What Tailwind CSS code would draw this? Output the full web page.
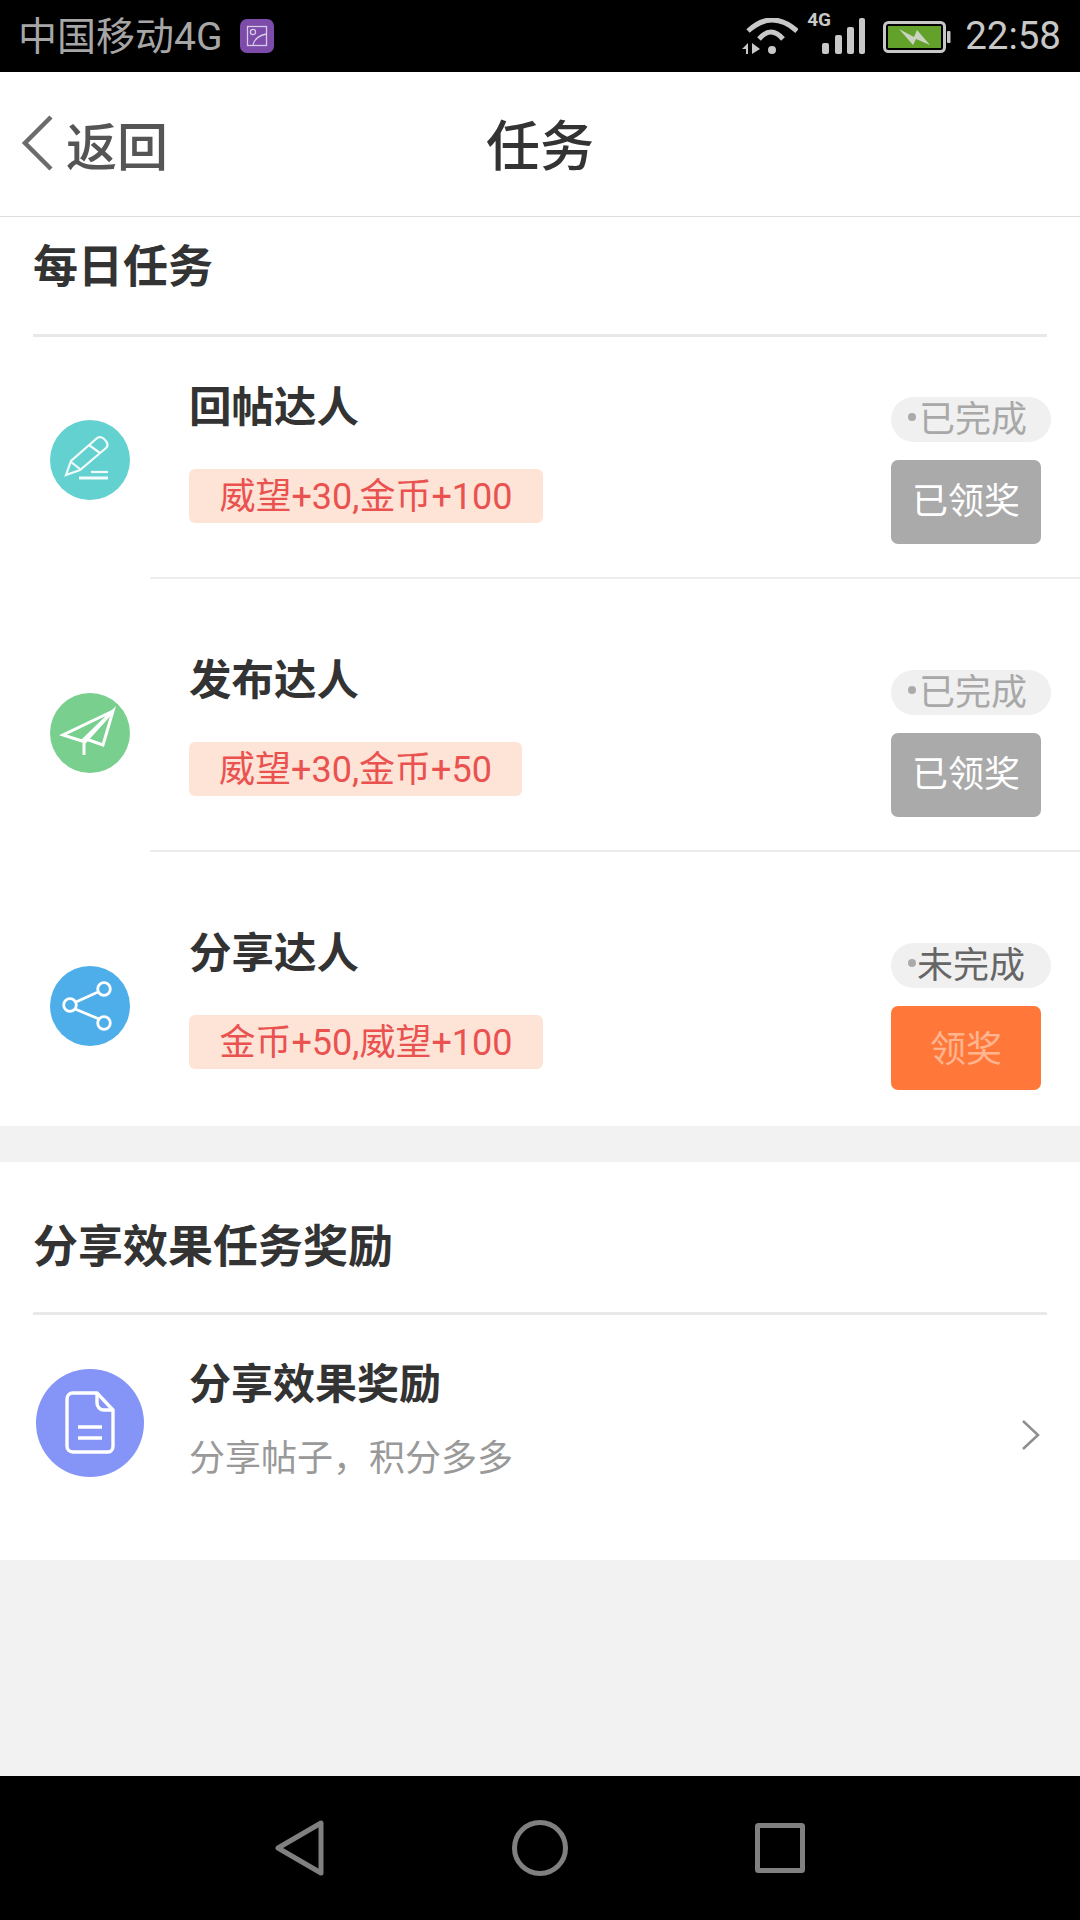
<!DOCTYPE html>
<html lang="zh"><head><meta charset="utf-8">
<script src="https://cdn.jsdelivr.net/npm/@tailwindcss/browser@4"></script>
</head>
<body class="m-0 bg-[#f2f2f2]">
<div class="w-[1080px] h-[1920px] flex flex-col overflow-hidden font-['Roboto','Noto_Sans_CJK_SC',sans-serif] bg-[#f2f2f2]">
  <!-- status bar -->
  <div class="h-[72px] bg-black flex items-center pl-[18px] pr-[19px] shrink-0">
    <span class="text-[39px] leading-[72px] text-[#a6a6a6] mt-[1px]">中国移动4G</span>
    <svg class="ml-[18px]" width="34" height="34" viewBox="0 0 34 34"><rect width="34" height="34" rx="7" fill="#7d4cab"/><rect x="7.500" y="7.500" width="19" height="19" fill="none" stroke="#d8cbe6" stroke-width="1.300"/><circle cx="13" cy="13" r="2.600" fill="none" stroke="#d8cbe6" stroke-width="1.300"/><path d="M13 26 C14 20 20 16 26.500 15" fill="none" stroke="#d8cbe6" stroke-width="1.300"/></svg>
    <div class="flex-1"></div>
    <svg width="56" height="38" viewBox="0 0 56 38" class="mr-[9px] mt-[2px]"><path d="M6 13 Q30 -9 55 13" fill="none" stroke="#c8c8c8" stroke-width="5"/><path d="M17 21 Q29 7 41 21" fill="none" stroke="#c8c8c8" stroke-width="5"/><circle cx="30" cy="32" r="4" fill="#c8c8c8"/><path d="M0 31 L6 25 V36 H4 V31 Z M10 25 L18 31 L10 36 Z" fill="#c8c8c8"/></svg>
    <div class="relative w-[58px] h-[36px] mr-[18px]">
      <span class="absolute left-0 top-[-5px] text-[19px] leading-[14px] font-bold text-[#c8c8c8]">4G</span>
      <svg width="58" height="36" viewBox="0 0 58 36" class="absolute left-0 top-0"><rect x="15" y="25" width="7" height="11" rx="2" fill="#c8c8c8"/><rect x="28" y="17" width="7" height="19" rx="2" fill="#c8c8c8"/><rect x="40" y="9" width="7" height="27" rx="2" fill="#c8c8c8"/><rect x="52" y="0" width="6" height="36" rx="2" fill="#c8c8c8"/></svg>
    </div>
    <svg width="68" height="32" viewBox="0 0 68 32" class="mr-[14px] mt-[2px]"><rect x="1.500" y="1.500" width="60" height="29" rx="4" fill="none" stroke="#c8c8c8" stroke-width="3"/><rect x="5" y="5" width="53" height="22" fill="#62a12a"/><rect x="64" y="10" width="3.500" height="12" rx="1" fill="#c8c8c8"/><path d="M16 8 L31 16 L34 9 L47 24 L33 18 L30 24 Z" fill="#c9d3bf"/></svg>
    <span class="text-[38.500px] leading-[72px] text-[#c8c8c8]">22:58</span>
  </div>
  <!-- header -->
  <div class="relative h-[145px] bg-white border-b border-[#dddddd] shrink-0 flex items-center justify-center">
    <div class="absolute left-[21px] top-0 h-full flex items-center">
      <svg width="34" height="58" viewBox="0 0 34 58" class="mt-[-2px]"><path d="M30 3 L4 29 L30 55" fill="none" stroke="#6b6b6b" stroke-width="4.500"/></svg>
      <span class="ml-[11px] mt-[8px] text-[51px] leading-none font-medium text-[#555555]">返回</span>
    </div>
    <span class="mt-[8px] text-[54px] leading-none text-[#333333] font-medium">任务</span>
  </div>
  <!-- daily tasks -->
  <div class="bg-white shrink-0">
    <div class="mx-[33px] h-[120px] border-b-[3px] border-[#e8e8e8] flex items-start pt-[21px]">
      <span class="text-[45px] leading-[60px] font-bold text-[#333333]">每日任务</span>
    </div>

    <div class="flex h-[242px]">
      <div class="w-[150px] shrink-0 pt-[83px] pl-[50px]">
        <div class="w-[80px] h-[80px] rounded-full bg-[#62d1cf]">
          <svg class="w-full h-full" viewBox="0 0 80 80" fill="none" stroke="#f2fbfb" stroke-width="2.200"><path d="M16 55 L21 41 L46 19 C49 16 53 17 55 20 C58 23 58 26 56 28 L30 50 Z"/><path d="M21 42 L30 49"/><path d="M39 25 L50 33"/><path d="M29 58 H58" stroke-width="3"/><path d="M41 52 H58"/></svg>
        </div>
      </div>
      <div class="flex-1 border-b-2 border-[#ececec] flex justify-between">
        <div class="pl-[39px] pt-[43px]">
          <div class="text-[42.500px] leading-[56px] font-bold text-[#333333]">回帖达人</div>
          <div class="mt-[33px] inline-flex items-center justify-center h-[54px] w-[354px] pt-[2px] rounded-[6px] bg-[#fee3d7] text-[36px] text-[#e9524f]">威望+30,金币+100</div>
        </div>
        <div class="w-[160px] pr-[29px] pt-[60px] flex flex-col items-start shrink-0 box-content ml-auto">
          <div class="w-[160px] h-[45px] rounded-full bg-[#f0f0f0] flex items-center pl-[17px] text-[36px] leading-none text-[#a8a8a8] shrink-0"><span class="w-[8px] h-[8px] rounded-full bg-[#aaaaaa] mr-[3px] mt-[-6px]"></span>已完成</div>
          <div class="mt-[18px] w-[150px] h-[84px] rounded-[7px] bg-[#aaaaaa] flex items-center justify-center text-[36px] text-white">已领奖</div>
        </div>
      </div>
    </div>

    <div class="flex h-[273px]">
      <div class="w-[150px] shrink-0 pt-[114px] pl-[50px]">
        <div class="w-[80px] h-[80px] rounded-full bg-[#78cf8e]">
          <svg class="w-full h-full" viewBox="0 0 80 80" fill="none" stroke="#ffffff" stroke-width="3"><path d="M63 18 L13 42 L32 48 L63 18 L53 52 L36 46"/><path d="M63 18 L34 50 L34 62"/></svg>
        </div>
      </div>
      <div class="flex-1 border-b-2 border-[#ececec] flex justify-between">
        <div class="pl-[39px] pt-[74px]">
          <div class="text-[42.500px] leading-[56px] font-bold text-[#333333]">发布达人</div>
          <div class="mt-[33px] inline-flex items-center justify-center h-[54px] w-[333px] pt-[2px] rounded-[6px] bg-[#fee3d7] text-[36px] text-[#e9524f]">威望+30,金币+50</div>
        </div>
        <div class="w-[160px] pr-[29px] pt-[91px] flex flex-col items-start shrink-0 box-content ml-auto">
          <div class="w-[160px] h-[45px] rounded-full bg-[#f0f0f0] flex items-center pl-[17px] text-[36px] leading-none text-[#a8a8a8] shrink-0"><span class="w-[8px] h-[8px] rounded-full bg-[#aaaaaa] mr-[3px] mt-[-6px]"></span>已完成</div>
          <div class="mt-[18px] w-[150px] h-[84px] rounded-[7px] bg-[#aaaaaa] flex items-center justify-center text-[36px] text-white">已领奖</div>
        </div>
      </div>
    </div>

    <div class="flex h-[274px]">
      <div class="w-[150px] shrink-0 pt-[114px] pl-[50px]">
        <div class="w-[80px] h-[80px] rounded-full bg-[#4eaeea]">
          <svg class="w-full h-full" viewBox="0 0 80 80" fill="none" stroke="#ffffff" stroke-width="2.800"><circle cx="20" cy="39" r="6.300"/><circle cx="54" cy="23" r="6.300"/><circle cx="54" cy="57" r="6.300"/><path d="M26 36 L48 26 M25 43 L49 53"/></svg>
        </div>
      </div>
      <div class="flex-1 flex justify-between">
        <div class="pl-[39px] pt-[74px]">
          <div class="text-[42.500px] leading-[56px] font-bold text-[#333333]">分享达人</div>
          <div class="mt-[33px] inline-flex items-center justify-center h-[54px] w-[354px] pt-[2px] rounded-[6px] bg-[#fee3d7] text-[36px] text-[#e9524f]">金币+50,威望+100</div>
        </div>
        <div class="w-[160px] pr-[29px] pt-[91px] flex flex-col items-start shrink-0 box-content ml-auto">
          <div class="w-[160px] h-[45px] rounded-full bg-[#f0f0f0] flex items-center pl-[17px] text-[36px] leading-none text-[#666666] shrink-0"><span class="w-[8px] h-[8px] rounded-full bg-[#aaaaaa] mr-[1px] mt-[-6px]"></span>未完成</div>
          <div class="mt-[18px] w-[150px] h-[84px] pt-[4px] rounded-[7px] bg-[#ff7839] flex items-center justify-center text-[36px] text-[#ffb590]">领奖</div>
        </div>
      </div>
    </div>
  </div>

  <div class="h-[36px] shrink-0"></div>

  <!-- share reward -->
  <div class="bg-white shrink-0 h-[398px]">
    <div class="mx-[33px] h-[153px] border-b-[3px] border-[#e8e8e8] pt-[56px]">
      <span class="block text-[45px] leading-[60px] font-bold text-[#333333]">分享效果任务奖励</span>
    </div>
    <div class="flex">
      <div class="w-[150px] shrink-0 pt-[54px] pl-[36px]">
        <div class="w-[108px] h-[108px] rounded-full bg-[#8594f7]">
          <svg class="w-full h-full" viewBox="0 0 108 108" fill="none" stroke="#ffffff" stroke-width="3.400"><path d="M37 24 H61 L77 41 V77 C77 80 75 83 72 83 H37 C33 83 31 80 31 77 V30 C31 27 33 24 37 24 Z"/><path d="M61 24 V34 C61 38 64 41 68 41 H77"/><path d="M42 58 H66 M42 69 H66"/></svg>
        </div>
      </div>
      <div class="pl-[39px] pt-[42px] flex-1">
        <div class="text-[42px] leading-[56px] font-bold text-[#333333]">分享效果奖励</div>
        <div class="mt-[21px] text-[36px] leading-[50px] text-[#999999]">分享帖子&#65292;积分多多</div>
      </div>
      <div class="pr-[39px] pt-[104px]">
        <svg width="20" height="32" viewBox="0 0 20 32" fill="none" stroke="#8f8f8f" stroke-width="2.500"><path d="M2 2 L17 16 L2 30"/></svg>
      </div>
    </div>
  </div>

  <div class="flex-1"></div>

  <!-- nav bar -->
  <div class="h-[144px] bg-black shrink-0 flex items-center justify-center gap-[187px]">
    <svg width="50" height="56" viewBox="0 0 50 56" fill="none" stroke="#808080" stroke-width="5" stroke-linejoin="round"><path d="M46 3 V53 L3 28 Z"/></svg>
    <svg width="56" height="56" viewBox="0 0 56 56" fill="none" stroke="#808080" stroke-width="5"><circle cx="28" cy="28" r="25.500"/></svg>
    <svg width="50" height="50" viewBox="0 0 50 50" fill="none" stroke="#808080" stroke-width="5" stroke-linejoin="round"><rect x="2.500" y="2.500" width="45" height="45" rx="1"/></svg>
  </div>
</div>
</body></html>
